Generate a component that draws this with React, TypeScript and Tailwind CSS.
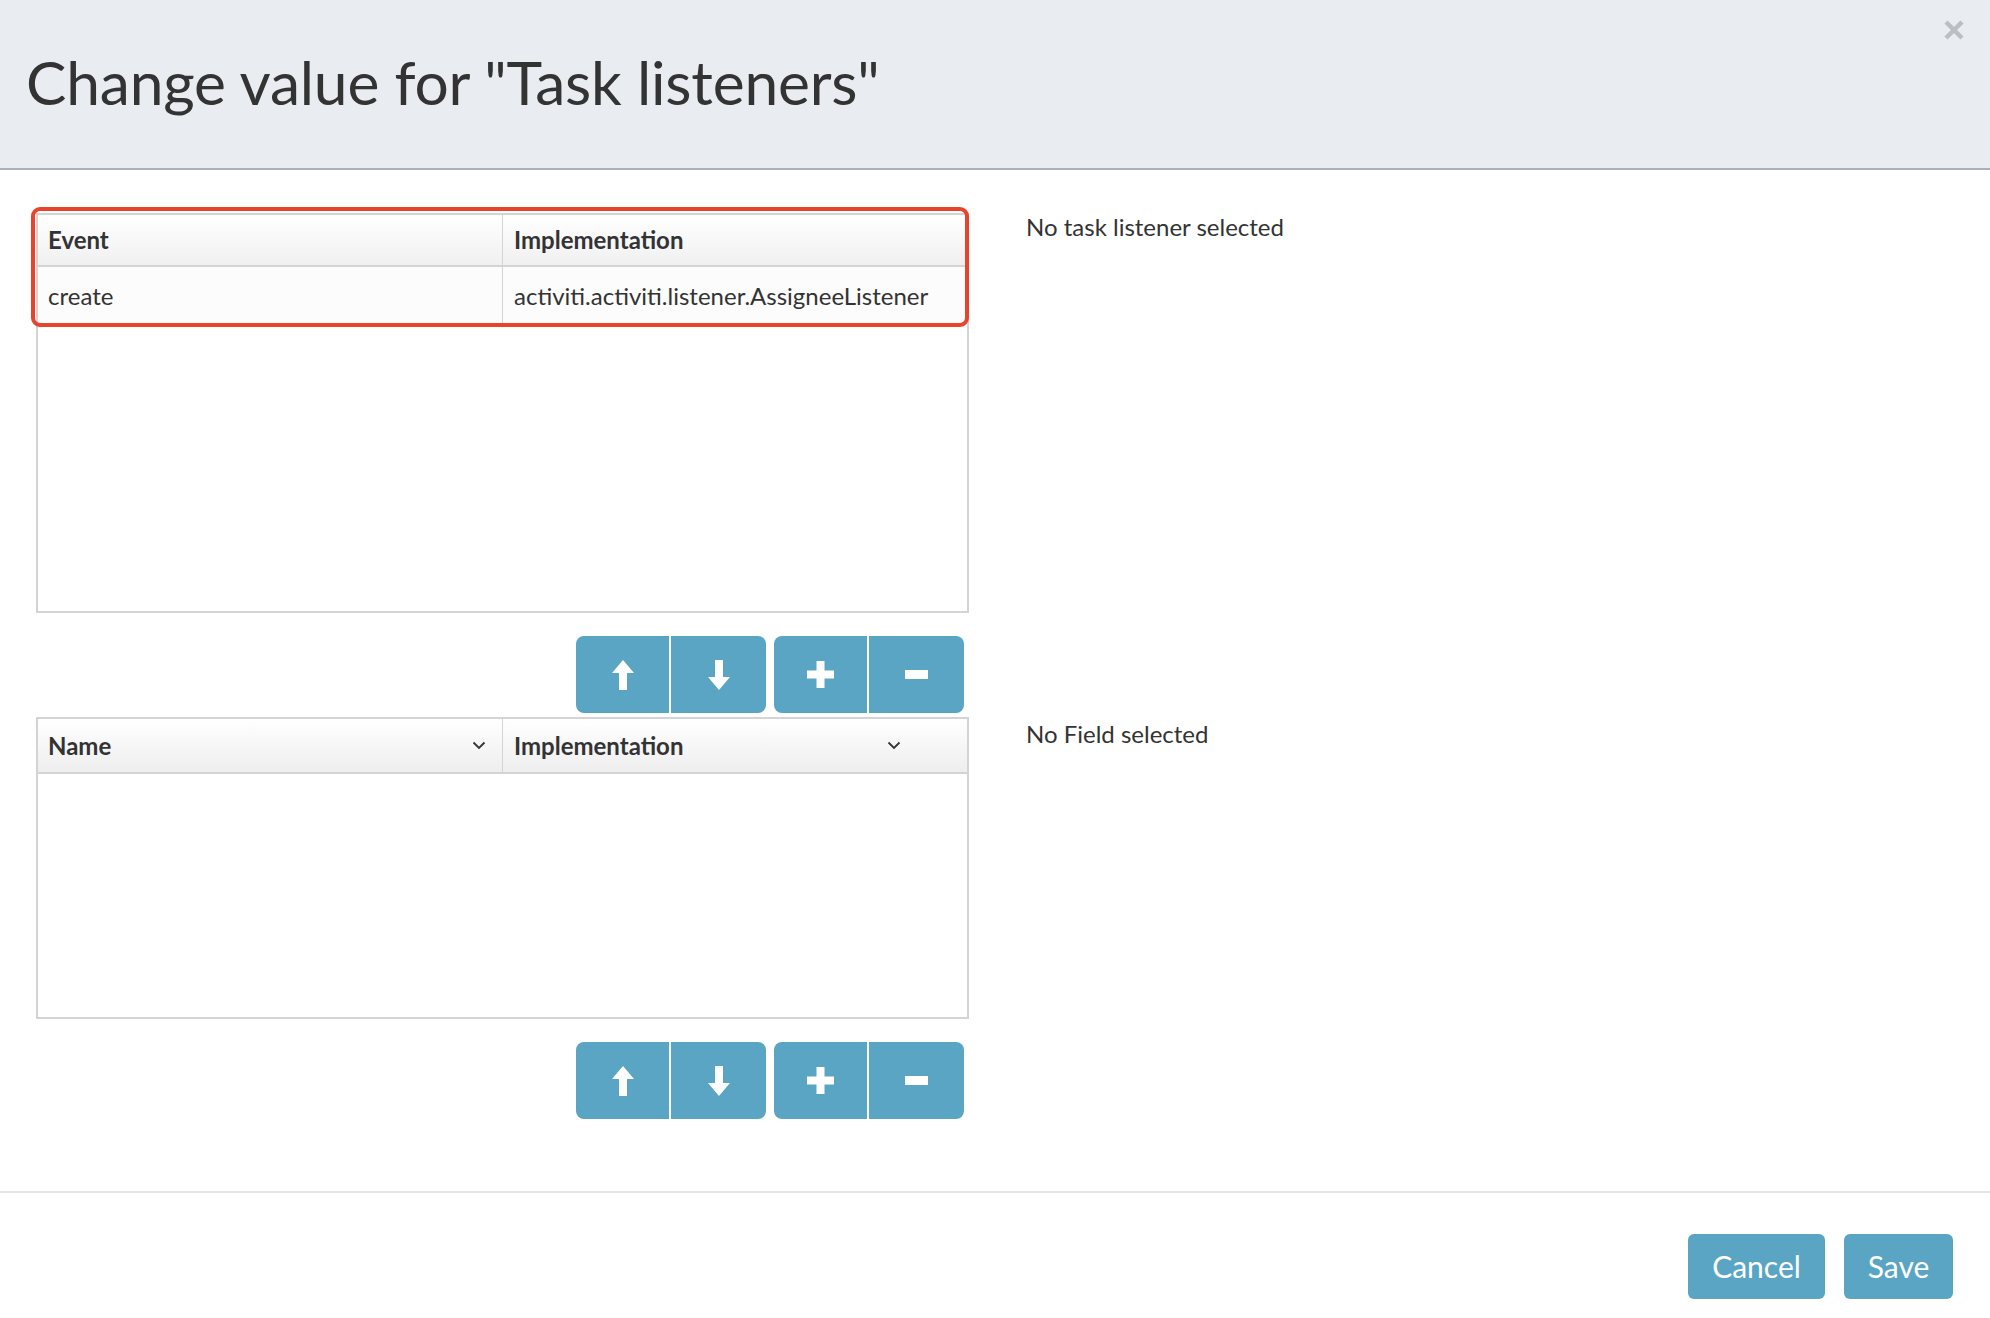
import React from 'react';

const font = { fontFamily: 'Lato, "Open Sans", sans-serif' };

const UpIcon = () => (
  <svg width="22" height="30" viewBox="0 0 22 30">
    <polygon points="11,0 22,13 15,13 15,30 7,30 7,13 0,13" fill="white" />
  </svg>
);

const DownIcon = () => (
  <svg width="22" height="30" viewBox="0 0 22 30">
    <polygon points="11,30 22,17 15,17 15,0 7,0 7,17 0,17" fill="white" />
  </svg>
);

const PlusIcon = () => (
  <svg width="27" height="27" viewBox="0 0 27 27">
    <rect x="9.5" y="0" width="8" height="27" fill="white" />
    <rect x="0" y="9.5" width="27" height="8" fill="white" />
  </svg>
);

const MinusIcon = () => (
  <svg width="23" height="9" viewBox="0 0 23 9">
    <rect x="0" y="0" width="23" height="9" fill="white" />
  </svg>
);

const Chevron = () => (
  <svg width="14" height="9" viewBox="0 0 14 9">
    <path d="M1.5 1.5 L7 7 L12.5 1.5" stroke="#333" strokeWidth="1.8" fill="none" />
  </svg>
);

const ToolButtons = () => (
  <div className="flex justify-end pr-[5px] gap-[8px]">
    <div className="flex rounded-[8px] overflow-hidden">
      <button className="w-[95px] h-[77px] bg-[#5aa5c3] flex items-center justify-center border-r-2 border-white">
        <UpIcon />
      </button>
      <button className="w-[95px] h-[77px] bg-[#5aa5c3] flex items-center justify-center">
        <DownIcon />
      </button>
    </div>
    <div className="flex rounded-[8px] overflow-hidden">
      <button className="w-[95px] h-[77px] bg-[#5aa5c3] flex items-center justify-center border-r-2 border-white">
        <PlusIcon />
      </button>
      <button className="w-[95px] h-[77px] bg-[#5aa5c3] flex items-center justify-center">
        <MinusIcon />
      </button>
    </div>
  </div>
);

export default function App() {
  return (
    <div className="w-[1990px] h-[1318px] bg-white text-[#333] overflow-hidden" style={font}>
      {/* Header */}
      <div className="relative h-[170px] bg-[#e9ecf1] border-b-2 border-[#aab0bd] flex items-center pl-[26px]">
        <h1 className="text-[60.5px] leading-none font-normal text-[#333] tracking-[-0.2px] pb-[4px]">
          Change value for "Task listeners"
        </h1>
        <button className="absolute right-[25px] top-[19px] w-[22px] h-[22px] flex items-center justify-center">
          <svg width="20" height="20" viewBox="0 0 20 20">
            <path d="M2 2 L18 18 M18 2 L2 18" stroke="#bcbec2" strokeWidth="4.5" />
          </svg>
        </button>
      </div>

      {/* Body */}
      <div className="pl-[36px] pt-[43px] pb-[72px]">
        <div className="flex gap-[57px]">
          <div className="w-[933px]">
            <div className="relative">
              <div className="h-[400px] border-2 border-[#d4d4d4]">
                <div className="flex h-[52px] bg-gradient-to-b from-white to-[#f0f0f0] border-b-2 border-[#d4d4d4] text-[24px] font-bold">
                  <div className="w-[465px] border-r border-[#d4d4d4] flex items-center pl-[10px]">Event</div>
                  <div className="flex-1 flex items-center pl-[11px]">Implementation</div>
                </div>
                <div className="flex h-[58px] bg-[#fcfcfc] text-[24px]">
                  <div className="w-[465px] border-r border-[#d4d4d4] flex items-center pl-[10px]">create</div>
                  <div className="flex-1 flex items-center pl-[11px]">activiti.activiti.listener.AssigneeListener</div>
                </div>
              </div>
              <div className="absolute left-[-5px] top-[-6px] w-[938px] h-[120px] border-[4px] border-[#e8432d] rounded-[9px] pointer-events-none" />
            </div>
            <div className="mt-[23px]">
              <ToolButtons />
            </div>
          </div>
          <div className="text-[24px] leading-[28px]">No task listener selected</div>
        </div>

        <div className="flex gap-[57px] mt-[4px]">
          <div className="w-[933px]">
            <div className="h-[302px] border-2 border-[#d4d4d4]">
              <div className="flex h-[55px] bg-gradient-to-b from-white to-[#eeeeee] border-b-2 border-[#d4d4d4] text-[24px] font-bold">
                <div className="w-[465px] border-r border-[#d4d4d4] flex items-center justify-between pl-[10px] pr-[16px]">
                  <span>Name</span>
                  <Chevron />
                </div>
                <div className="flex-1 flex items-center justify-between pl-[11px] pr-[66px]">
                  <span>Implementation</span>
                  <Chevron />
                </div>
              </div>
            </div>
            <div className="mt-[23px]">
              <ToolButtons />
            </div>
          </div>
          <div className="text-[24px] pt-[3px] leading-[28px]">No Field selected</div>
        </div>
      </div>

      {/* Footer */}
      <div className="border-t-2 border-[#e5e5e5] flex justify-end gap-[19px] pt-[41px] pr-[37px]">
        <button className="w-[137px] h-[65px] rounded-[6px] bg-[#5aa5c3] text-white text-[30px]">Cancel</button>
        <button className="w-[109px] h-[65px] rounded-[6px] bg-[#5aa5c3] text-white text-[30px]">Save</button>
      </div>
    </div>
  );
}
